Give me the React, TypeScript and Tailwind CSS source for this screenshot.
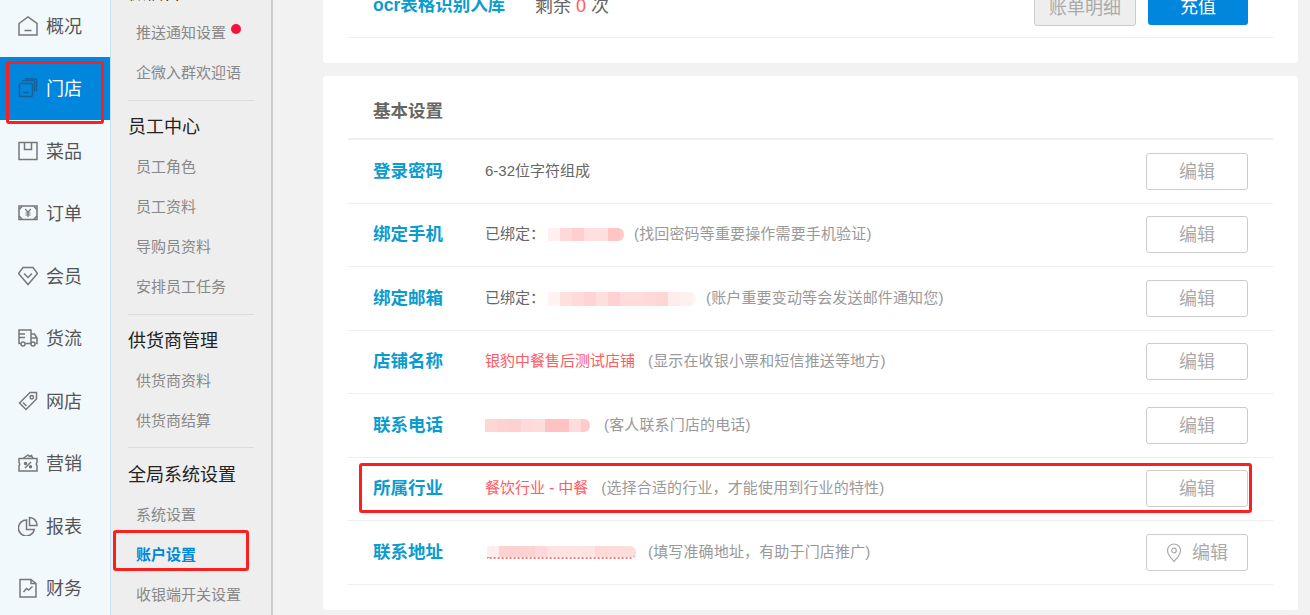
import React from "react";

const I = ({ children, cls }: { children: React.ReactNode; cls: string }) => (
  <svg viewBox="0 0 20 20" width="20" height="20" fill="none" stroke="currentColor" strokeWidth="1.5" className={cls}>
    {children}
  </svg>
);

const icons: Record<string, React.ReactNode> = {
  home: (<><path d="M1 7.500 10 1l9 6.500V19H1z" /><path d="M6.500 14.500h7" /></>),
  store: (<><rect x="1.500" y="5.500" width="13" height="13" rx="1.500" /><path d="M4.500 3.500c0-.6.5-1 1-1h11" /><path d="M7 1h10.500c.6 0 1 .4 1 1v11" /><path d="M5.500 14.500h5" /><path d="M16.500 3v11" /></>),
  box: (<><path d="M1 1.500h18v17H1z" /><path d="M6.500 1.500v7h7v-7" /></>),
  order: (<><rect x="1" y="3" width="18" height="13.500" /><path d="M1 6.500 4 3.500M16 3.500l3 3M1 13l3 3M16 16l3-3" /><path d="m7.300 6 2.700 3.300L12.700 6M10 9.300V14M7.500 10h5M7.500 12h5" strokeWidth="1.200" /></>),
  gem: (<><path d="M5 1.500h10l4.500 6L10 18.500.5 7.500z" /><path d="m6 7.500 4 4 4-4" /></>),
  truck: (<><path d="M13 15.500H7.500M2.800 15.500H1V2h12v13.500" /><path d="M13 6h3.500l2.500 4v5.500h-1.500" /><path d="M1 6h6M1 9.500h6M13 10h6" /><circle cx="5" cy="16" r="2" /><circle cx="15" cy="16" r="2" /></>),
  tag: (<><path d="M12 1.500h6.500V8L8 18.500 1.500 12z" /><circle cx="13.800" cy="6.200" r="1.700" /><path d="m5 11.500 3.500 3.500" /></>),
  ticket: (<><path d="M1 5.500h18v4a2 2 0 0 0 0 3v5.500H1v-5.500a2 2 0 0 0 0-3z" /><path d="M5 5.500 10 2l1.500 1.500 2-1 1.500 3" /><path d="m7 15 6-6" /><circle cx="7.500" cy="10.500" r="1" fill="currentColor" /><circle cx="12.500" cy="13.800" r="1" fill="currentColor" /></>),
  pie: (<><path d="M8.500 4a8 8 0 1 0 7.800 9.500H8.500z" /><path d="M11.500 1.500a7.500 7.500 0 0 1 7.500 8h-7.500z" /></>),
  doc: (<><path d="M2 1.500h11l5 4V19H2z" /><path d="M13 1.500v4h5" /><path d="m5.500 14 3-3.500 2 1.500 4-3.500" /></>),
};

const navItems = [
  ["概况", "home"],
  ["门店", "store"],
  ["菜品", "box"],
  ["订单", "order"],
  ["会员", "gem"],
  ["货流", "truck"],
  ["网店", "tag"],
  ["营销", "ticket"],
  ["报表", "pie"],
  ["财务", "doc"],
];

const SubItem = ({ label, active, dot }: { label: string; active?: boolean; dot?: boolean }) => (
  <div className={`flex h-10 items-center pl-[25px] pt-[2px] text-[15px] ${active ? "font-bold text-[#0086dc]" : "text-[#888888]"}`}>
    {label}
    {dot && <span className="ml-[5px] mb-2 h-2.5 w-2.5 rounded-full bg-[#f5133b]" />}
  </div>
);

const SubHead = ({ label }: { label: string }) => (
  <div className="flex h-10 items-center pl-[17px] pt-[2px] text-lg text-[#222222]">{label}</div>
);

const Sep = ({ cls }: { cls: string }) => <div className={`mx-[17px] h-px w-[126px] bg-[#dddddd] ${cls}`} />;

const Blocks = ({ cells, cls }: { cells: string[]; cls: string }) => (
  <span className={`flex overflow-hidden rounded-r-[6px] ${cls}`}>
    {cells.map((c, i) => (
      <span key={i} className={`h-full w-3 flex-none ${c}`} />
    ))}
  </span>
);

const EditButton = ({ pin }: { pin?: boolean }) => (
  <button className="ml-auto mr-[25px] flex h-[37px] w-[102px] flex-none items-center justify-center rounded-[3px] border border-[#cccccc] bg-white text-lg text-[#aaaaaa]">
    {pin && (
      <svg viewBox="0 0 16 20" width="16" height="20" fill="none" stroke="#aaaaaa" strokeWidth="1.200" className="mr-[10px]">
        <path d="M8 18.500C4.500 14.500 1.500 11.500 1.500 7.500a6.500 6.500 0 0 1 13 0c0 4-3 7-6.500 11z" />
        <circle cx="8" cy="7.500" r="2.300" />
      </svg>
    )}
    编辑
  </button>
);

const Row = ({ title, h, children, pin }: { title: string; h: string; children: React.ReactNode; pin?: boolean }) => (
  <div className={`flex ${h} items-center border-b border-[#eeeeee] pl-[25px]`}>
    <div className="w-[112px] flex-none text-[17.5px] font-bold text-[#0a9bcf]">{title}</div>
    <div className="flex items-center text-[15px]">{children}</div>
    <EditButton pin={pin} />
  </div>
);

const Note = ({ cls, children }: { cls: string; children: React.ReactNode }) => (
  <span className={`tracking-[0.15px] text-[#999999] ${cls}`}>{children}</span>
);

export default function App() {
  return (
    <div
      className="relative flex h-[615px] w-[1310px] overflow-hidden bg-[#f2f2f2]"
      style={{ fontFamily: '"Liberation Sans","Noto Sans CJK SC",sans-serif' }}
    >
      <nav className="h-full w-[111px] flex-none border-r border-[#c5e3f5] bg-[#f2f9fd]">
        <div className="-mt-[5.5px]">
          {navItems.map(([label, icon]) => {
            const active = label === "门店";
            return (
              <div
                key={label}
                className={`flex h-[62.5px] items-center pl-[18px] text-lg ${active ? "bg-[#0086dc] text-white" : "text-[#555555]"}`}
              >
                <I cls={`mr-2 flex-none ${active ? "text-[#1b5f94]" : "text-[#777777]"}`}>{icons[icon]}</I>
                <span className="pt-[2px]">{label}</span>
              </div>
            );
          })}
        </div>
      </nav>

      <aside className="h-full w-[162px] flex-none border-r-2 border-[#cccccc] bg-[#eeeeee]">
        <div className="-mt-7">
          <SubHead label="微信群" />
          <SubItem label="推送通知设置" dot />
          <SubItem label="企微入群欢迎语" />
          <Sep cls="mt-2" />
          <div className="mt-[5px]">
            <SubHead label="员工中心" />
            <SubItem label="员工角色" />
            <SubItem label="员工资料" />
            <SubItem label="导购员资料" />
            <SubItem label="安排员工任务" />
          </div>
          <Sep cls="mt-2" />
          <div className="mt-[5px]">
            <SubHead label="供货商管理" />
            <SubItem label="供货商资料" />
            <SubItem label="供货商结算" />
          </div>
          <Sep cls="mt-[7px]" />
          <div className="mt-[6px]">
            <SubHead label="全局系统设置" />
            <SubItem label="系统设置" />
            <SubItem label="账户设置" active />
            <SubItem label="收银端开关设置" />
          </div>
        </div>
      </aside>

      <main className="min-w-0 flex-1 pl-[50px] pr-3">
        <section className="-mt-[20px] rounded-[3px] bg-white px-[25px] pb-[25px]">
          <div className="flex h-[58px] items-center border-b border-[#eeeeee] pb-[6px] pl-[25px]">
            <div className="w-[162px] flex-none text-[17.5px] font-bold text-[#0a9bcf]">ocr表格识别入库</div>
            <div className="text-lg text-[#666666]">
              剩余 <span className="text-[#ff5a5f]">0</span> 次
            </div>
            <button className="ml-auto mt-[9px] flex h-[37px] w-[102px] flex-none items-center justify-center self-start rounded-[3px] border border-[#cccccc] bg-[#eeeeee] text-lg text-[#aaaaaa]">
              账单明细
            </button>
            <button className="ml-3 mr-[25px] mt-[9px] flex h-9 w-[100px] flex-none items-center justify-center self-start rounded-[3px] bg-[#0086dc] text-lg text-white">
              充值
            </button>
          </div>
        </section>

        <section className="mt-[13px] h-[534px] rounded-[3px] bg-white px-[25px]">
          <div className="flex h-[64px] items-center border-b-2 border-[#eeeeee] pl-[25px] pt-[8px] text-[17.5px] font-bold text-[#666666]">
            基本设置
          </div>
          <Row title="登录密码" h="h-[64px]">
            <span className="text-[#666666]">6-32位字符组成</span>
          </Row>
          <Row title="绑定手机" h="h-[63px] pb-px">
            <span className="text-[#666666]">已绑定：</span>
            <Blocks
              cls="ml-[3px] h-[13px] w-[76px]"
              cells={["bg-[#fff0f0]", "bg-[#ffd9d9]", "bg-[#ffcfcf]", "bg-[#ffdfe0]", "bg-[#ffdfe0]", "bg-[#ffc4c4]", "bg-[#ffcaca]"]}
            />
            <Note cls="ml-[10px]">(找回密码等重要操作需要手机验证)</Note>
          </Row>
          <Row title="绑定邮箱" h="h-[64px]">
            <span className="text-[#666666]">已绑定：</span>
            <Blocks
              cls="ml-[3px] h-[14px] w-[148px]"
              cells={["bg-[#fff3f3]", "bg-[#ffe0e0]", "bg-[#ffdada]", "bg-[#ffd4d4]", "bg-[#ffdede]", "bg-[#ffd2d2]", "bg-[#ffdbdb]", "bg-[#ffdbdb]", "bg-[#ffd8d8]", "bg-[#ffd6d6]", "bg-[#ffecec]", "bg-[#fff0f0]", "bg-[#fff5f5]"]}
            />
            <Note cls="ml-[10px]">(账户重要变动等会发送邮件通知您)</Note>
          </Row>
          <Row title="店铺名称" h="h-[63px] pb-px">
            <span className="text-[#ff5a5f]">银豹中餐售后测试店铺</span>
            <Note cls="ml-[13px]">(显示在收银小票和短信推送等地方)</Note>
          </Row>
          <Row title="联系电话" h="h-[64px]">
            <Blocks
              cls="h-[13px] w-[105px]"
              cells={["bg-[#ffd6d6]", "bg-[#ffd2d2]", "bg-[#ffd0d0]", "bg-[#ffd9dc]", "bg-[#ffdcdc]", "bg-[#ffc2c2]", "bg-[#ffc2c2]", "bg-[#ffdcdc]", "bg-[#ffcaca]"]}
            />
            <Note cls="ml-[14px]">(客人联系门店的电话)</Note>
          </Row>
          <Row title="所属行业" h="h-[63px] pb-px">
            <span className="text-[#ff5a5f]">餐饮行业 - 中餐</span>
            <Note cls="ml-[13px]">(选择合适的行业，才能使用到行业的特性)</Note>
          </Row>
          <Row title="联系地址" h="h-[64px]" pin>
            <Blocks
              cls="ml-[2px] h-[13px] w-[149px] rounded-none border-b-2 border-dotted border-[#ff7a7a]"
              cells={["bg-[#ffeeee]", "bg-[#ffd2d2]", "bg-[#ffd0d0]", "bg-[#ffd2d2]", "bg-[#ffd9d9]", "bg-[#ffe2e2]", "bg-[#ffe2e2]", "bg-[#ffe4e4]", "bg-[#ffe2e2]", "bg-[#ffd8d8]", "bg-[#ffdcdc]", "bg-[#ffdcdc]", "bg-[#ffdcdc]"]}
            />
            <Note cls="ml-[12px]">(填写准确地址，有助于门店推广)</Note>
          </Row>
        </section>
      </main>

      <div className="absolute left-[6px] top-[61px] h-[63px] w-[98px] rounded-[3px] border-[3px] border-[#fb1f1f]" />
      <div className="absolute left-[113px] top-[530px] h-[41px] w-[136px] rounded-[3px] border-[3px] border-[#fb1f1f]" />
      <div className="absolute left-[359px] top-[463px] h-[50px] w-[893px] rounded-[3px] border-[3px] border-[#fb1f1f]" />
    </div>
  );
}
